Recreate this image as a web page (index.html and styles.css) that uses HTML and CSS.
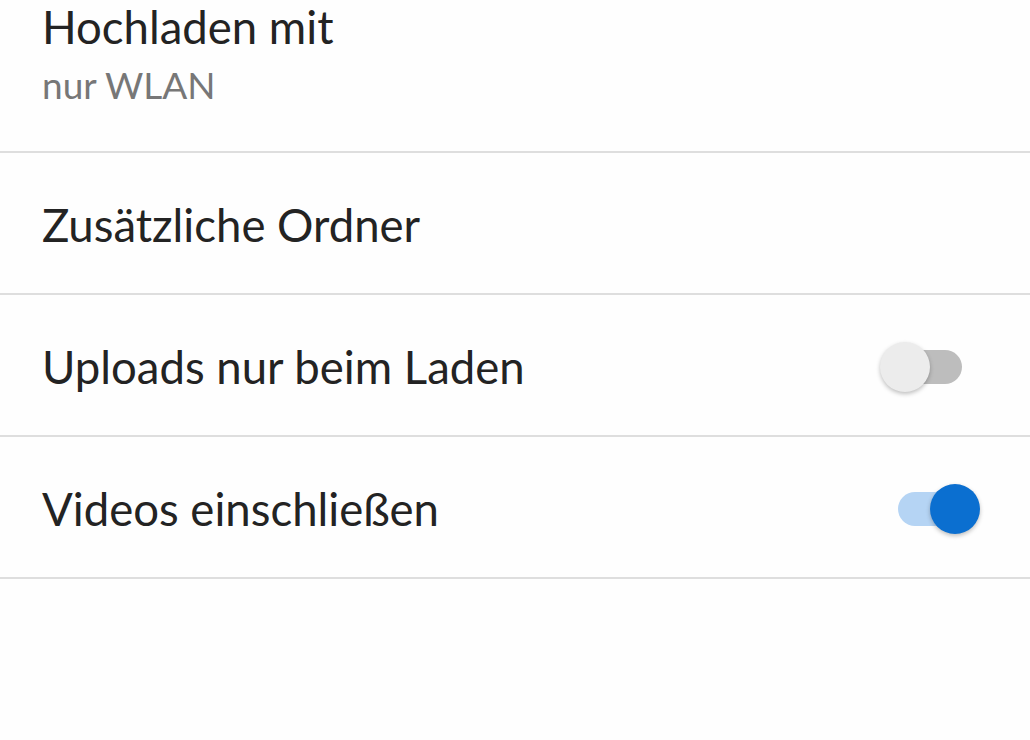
FILE: index.html
```html
<!DOCTYPE html>
<html lang="de">

<head>
    <meta charset="UTF-8">
    <meta name="viewport" content="width=device-width, initial-scale=1.0">
    <title>Sicherung</title>
    <link rel="stylesheet" href="styles.css">
</head>

<body>

    <ul class="pref-list">
        <li class="pref-item pref-first">
            <div class="pref-text">
                <span class="pref-title">Hochladen mit</span>
                <span class="pref-summary">nur WLAN</span>
            </div>
        </li>
        <li class="pref-item">
            <span class="pref-title">Zusätzliche Ordner</span>
        </li>
        <li class="pref-item">
            <span class="pref-title">Uploads nur beim Laden</span>
            <span class="switch"><span class="switch-track"></span><span class="switch-thumb"></span></span>
        </li>
        <li class="pref-item">
            <span class="pref-title">Videos einschließen</span>
            <span class="switch switch-on"><span class="switch-track"></span><span class="switch-thumb"></span></span>
        </li>
    </ul>

</body>

</html>
```

FILE: styles.css
```css
/* Estilos generales */
body {
    font-family: Lato, "Open Sans", sans-serif;
    background-color: #fefefe;
    color: #222;
    margin: 0;
    padding: 0;
}

.pref-list {
    list-style-type: none;
    margin: 0;
    padding: 0;
}

.pref-item {
    display: flex;
    align-items: center;
    justify-content: space-between;
    box-sizing: border-box;
    height: 142px;
    padding: 3px 50px 0 42px;
    border-bottom: 2px solid #dedede;
}

.pref-first {
    height: 153px;
    padding-top: 1px;
    align-items: flex-start;
}

.pref-text {
    display: flex;
    flex-direction: column;
}

.pref-title {
    font-size: 45.5px;
    line-height: 52px;
    color: #232323;
}

.pref-summary {
    font-size: 37px;
    line-height: 52px;
    margin-top: 6px;
    color: #777;
}

/* Interruptor */
.switch {
    position: relative;
    width: 100px;
    height: 52px;
}

.switch-track {
    position: absolute;
    left: 25px;
    right: 18px;
    top: 9px;
    height: 34px;
    border-radius: 17px;
    background-color: #bdbdbd;
}

.switch-thumb {
    position: absolute;
    left: 0;
    top: 1px;
    width: 50px;
    height: 50px;
    border-radius: 50%;
    background-color: #ececec;
    box-shadow: 0px 2px 4px rgba(0, 0, 0, 0.25);
}

.switch-on .switch-track {
    left: 18px;
    right: 26px;
    background-color: #b5d4f4;
}

.switch-on .switch-thumb {
    left: auto;
    right: 0;
    background-color: #0b6fd0;
}
```
